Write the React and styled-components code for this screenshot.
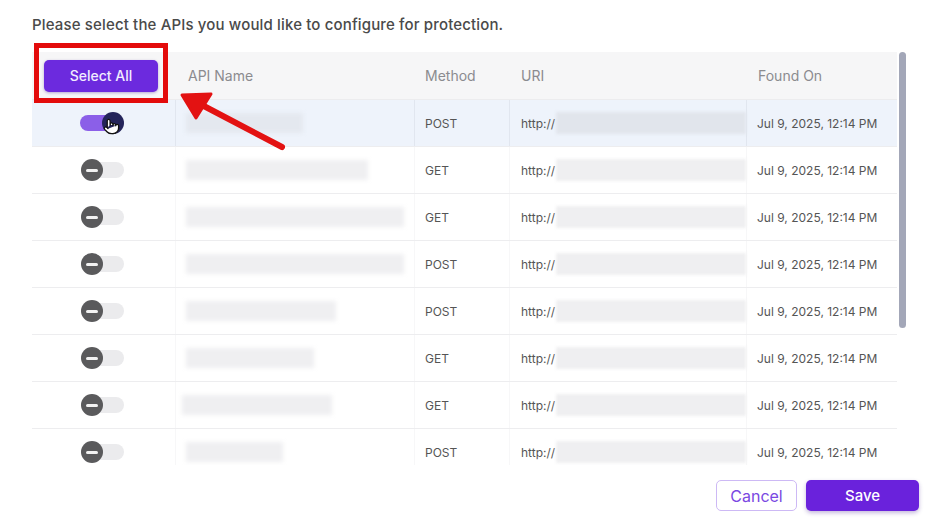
import React from 'react'
import styled, { createGlobalStyle } from 'styled-components'
import { Pointer } from 'lucide-react'

const GlobalStyle = createGlobalStyle`
  body {
    margin: 0;
    background: #fff;
    font-family: Inter, "Noto Sans", sans-serif;
  }
`

const rows = [
  { method: 'POST', name: 117, selected: true },
  { method: 'GET', name: 182 },
  { method: 'GET', name: 227 },
  { method: 'POST', name: 227 },
  { method: 'POST', name: 150 },
  { method: 'GET', name: 128 },
  { method: 'GET', name: 150, shift: -4 },
  { method: 'POST', name: 97 },
]

function App() {
  return (
    <Page>
      <GlobalStyle />
      <Title>Please select the APIs you would like to configure for protection.</Title>
      <TableFrame>
        <Table>
          <HeaderRow>
            <HeadCell $pad={12}><SelectAll>Select All</SelectAll></HeadCell>
            <HeadCell $pad={12}>API Name</HeadCell>
            <HeadCell $pad={10}>Method</HeadCell>
            <HeadCell $pad={11}>URI</HeadCell>
            <HeadCell $pad={11}>Found On</HeadCell>
          </HeaderRow>
          {rows.map((r, i) => (
            <Row key={i} $selected={r.selected}>
              <ToggleCell $selected={r.selected}>
                <Toggle>
                  <Track $on={r.selected} />
                  <Knob $on={r.selected}>
                    {!r.selected && <Minus />}
                  </Knob>
                  {r.selected && (
                    <Hand>
                      <Pointer size={17} fill="#fff" stroke="#111" strokeWidth={1.8} />
                    </Hand>
                  )}
                </Toggle>
              </ToggleCell>
              <Cell $selected={r.selected}>
                <Blur style={{ width: r.name, marginLeft: r.shift || 0 }} $selected={r.selected} />
              </Cell>
              <Cell $selected={r.selected}>{r.method}</Cell>
              <Cell $selected={r.selected} $flush>
                http://<UriBlur $selected={r.selected} />
              </Cell>
              <Cell $selected={r.selected}>Jul 9, 2025, 12:14 PM</Cell>
            </Row>
          ))}
        </Table>
        <ScrollThumb />
      </TableFrame>
      <Footer>
        <CancelButton>Cancel</CancelButton>
        <SaveButton>Save</SaveButton>
      </Footer>

      <Highlight />
      <Arrow width="952" height="522" viewBox="0 0 952 522">
        <line x1="282" y1="147" x2="200" y2="104" stroke="#e31212" strokeWidth="6" strokeLinecap="round" />
        <polygon points="182,95 211,94 196,118" fill="#e31212" stroke="#e31212" strokeWidth="3" strokeLinejoin="round" />
      </Arrow>
    </Page>
  )
}

export default App

const Page = styled.div`
  position: relative;
  width: 952px;
  height: 522px;
  box-sizing: border-box;
  padding: 15px 33px 0 32px;
  overflow: hidden;
`

const Title = styled.div`
  font-size: 15px;
  line-height: 20px;
  font-weight: 500;
  letter-spacing: 0.15px;
  color: #4a4a4a;
  margin-bottom: 17px;
`

const TableFrame = styled.div`
  position: relative;
  width: 878px;
  height: 413px;
  overflow: hidden;
`

const ScrollThumb = styled.div`
  position: absolute;
  right: 4px;
  top: 0;
  width: 7px;
  height: 276px;
  border-radius: 4px;
  background: #a3a7b8;
`

const Table = styled.div`
  width: 865px;
  display: flex;
  flex-direction: column;
`

const grid = `
  display: grid;
  grid-template-columns: 144px 239px 95px 237px 150px;
`

const HeaderRow = styled.div`
  ${grid}
  height: 48px;
  background: #f6f6f7;
  border-bottom: 1px solid #ececee;
  box-sizing: border-box;
`

const HeadCell = styled.div`
  display: flex;
  align-items: center;
  padding: 0 10px 0 ${p => p.$pad}px;
  font-size: 14px;
  color: #8b8b8f;
`

const SelectAll = styled.button`
  width: 114px;
  height: 32px;
  border: none;
  border-radius: 5px;
  background: #6c2ade;
  color: #f1ecff;
  font-family: inherit;
  font-size: 14px;
  font-weight: 500;
  box-shadow: 0 1px 3px rgba(60, 20, 140, 0.35);
`

const Row = styled.div`
  ${grid}
  height: 47px;
  box-sizing: border-box;
  border-bottom: 1px solid #ededef;
  background: ${p => (p.$selected ? '#eef3fb' : '#fff')};
`

const Cell = styled.div`
  display: flex;
  align-items: center;
  padding: ${p => (p.$flush ? '0 0 0 11px' : '0 10px 0 10px')};
  font-size: 12px;
  color: #555;
  border-right: 1px solid ${p => (p.$selected ? '#e1e6ef' : '#f7f7f8')};
  &:last-child {
    border-right: none;
  }
`

const ToggleCell = styled(Cell)`
  padding: 0 0 0 48px;
`

const Toggle = styled.div`
  position: relative;
  width: 44px;
  height: 22px;
`

const Track = styled.div`
  position: absolute;
  top: 3px;
  left: ${p => (p.$on ? '0' : '7px')};
  width: ${p => (p.$on ? '38px' : '37px')};
  height: 16px;
  border-radius: 8px;
  background: ${p => (p.$on ? '#8b5fe8' : '#ebebed')};
`

const Knob = styled.div`
  position: absolute;
  top: 0;
  left: ${p => (p.$on ? '22px' : '1px')};
  width: 22px;
  height: 22px;
  border-radius: 50%;
  background: ${p => (p.$on ? '#24245a' : '#5a5a5c')};
  display: flex;
  align-items: center;
  justify-content: center;
`

const Minus = styled.span`
  width: 12px;
  height: 3px;
  border-radius: 2px;
  background: #f2f2f2;
`

const Hand = styled.span`
  position: absolute;
  top: 6px;
  left: 23px;
  display: flex;
`

const Blur = styled.div`
  height: 20px;
  margin-left: 2px;
  background: ${p => (p.$selected ? '#e4e8ef' : '#efeff1')};
  filter: blur(2px);
`

const UriBlur = styled.span`
  flex: 1;
  height: 22px;
  margin-left: 1px;
  background: ${p => (p.$selected ? '#e1e5ec' : '#efeff1')};
  filter: blur(1.5px);
`

const Footer = styled.div`
  display: flex;
  justify-content: flex-end;
  gap: 9px;
  margin-top: 15px;
`

const CancelButton = styled.button`
  width: 81px;
  height: 31px;
  border: 1px solid #cdb9f5;
  border-radius: 5px;
  background: #fff;
  color: #7a48e2;
  font-family: inherit;
  font-size: 16px;
`

const SaveButton = styled.button`
  width: 113px;
  height: 31px;
  border: none;
  border-radius: 5px;
  background: #6a22dc;
  color: #fff;
  font-family: inherit;
  font-size: 15px;
  font-weight: 500;
  box-shadow: 0 2px 4px rgba(60, 20, 140, 0.3);
`

const Highlight = styled.div`
  position: absolute;
  left: 34px;
  top: 43px;
  width: 134px;
  height: 60px;
  box-sizing: border-box;
  border: 5px solid #e30b0b;
  pointer-events: none;
`

const Arrow = styled.svg`
  position: absolute;
  left: 0;
  top: 0;
  pointer-events: none;
`
